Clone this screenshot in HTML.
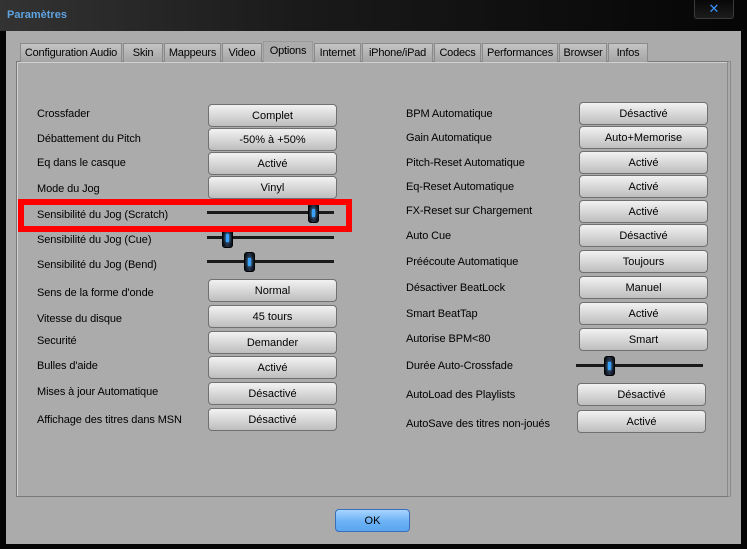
<!DOCTYPE html>
<html><head><meta charset="utf-8"><style>
*{margin:0;padding:0;box-sizing:border-box}
body{width:747px;height:549px;background:#050505;position:relative;overflow:hidden;font-family:Tahoma,"Liberation Sans","DejaVu Sans",sans-serif;font-size:11px;color:#000}
#title{position:absolute;left:0;top:0;width:747px;height:31px;background:linear-gradient(90deg,#333 0%,#1a1a1a 40%,#050505 100%)}
#title span{position:absolute;left:7px;top:9px;color:#5fa3e0;font-weight:bold;font-size:11px}
#close{position:absolute;left:694px;top:-3px;width:40px;height:22px;border:1px solid #3a3a3a;border-radius:3px;background:linear-gradient(#050505,#1c1c1c);color:#3a95ff;font-weight:bold;font-size:13px;text-align:center;line-height:23px;font-family:"DejaVu Sans",sans-serif}
#client{position:absolute;left:6px;top:31px;width:735px;height:513px;background:#ababab}
#panel{position:absolute;left:16px;top:61px;width:715px;height:436px;border:1px solid #7a7a7a;border-right:4px double #8a8a8a;box-shadow:inset 1px 1px 0 #d0d0d0}
.tab{position:absolute;top:43px;height:19px;border:1px solid #8a8a8a;border-bottom:none;background:linear-gradient(#c4c4c4,#a4a4a4);text-align:center;line-height:19px;font-size:11px;letter-spacing:-0.2px}
.tab.sel{top:41px;height:21px;background:#ababab;z-index:2;border-color:#999;line-height:18px}
.l{position:absolute;white-space:nowrap;letter-spacing:-0.1px}
.b{position:absolute;width:129px;height:23px;border:1px solid #707070;border-radius:4px;background:linear-gradient(#f2f2f2 0%,#d8d8d8 50%,#bdbdbd 100%);text-align:center;line-height:23px}
.tr{position:absolute;height:3px;background:#1a1a1a;width:127px}
.th{position:absolute;width:11px;height:20px;border-radius:3px;background:linear-gradient(90deg,#0a0f18,#26334a 50%,#0a0f18);border:1px solid #000}
.th::after{content:"";position:absolute;left:3px;top:5px;width:3px;height:8px;background:#3aa0ff;box-shadow:0 0 3px #6cf}
#red{position:absolute;left:18px;top:199px;width:334px;height:33px;border:6px solid #f00}
#ok{position:absolute;left:335px;top:509px;width:75px;height:23px;border:1px solid #3a6fb8;border-radius:4px;background:linear-gradient(#a8d4ff,#6cb2f6 55%,#5aa6f0);text-align:center;line-height:22px;font-size:11px}
</style></head><body>
<div id="title"><span>Paramètres</span></div>
<div id="close">✕</div>
<div id="client"></div>
<div id="panel"></div>
<div class="tab" style="left:20px;width:102px">Configuration Audio</div>
<div class="tab" style="left:123px;width:40px">Skin</div>
<div class="tab" style="left:164px;width:57px">Mappeurs</div>
<div class="tab" style="left:222px;width:40px">Video</div>
<div class="tab sel" style="left:263px;width:50px">Options</div>
<div class="tab" style="left:314px;width:47px">Internet</div>
<div class="tab" style="left:362px;width:71px">iPhone/iPad</div>
<div class="tab" style="left:434px;width:47px">Codecs</div>
<div class="tab" style="left:482px;width:76px">Performances</div>
<div class="tab" style="left:559px;width:48px">Browser</div>
<div class="tab" style="left:608px;width:40px">Infos</div>

<div class="l" style="left:37px;top:108px">Crossfader</div><div class="b" style="left:208px;top:104px">Complet</div>
<div class="l" style="left:37px;top:133px">Débattement du Pitch</div><div class="b" style="left:208px;top:128px">-50% à +50%</div>
<div class="l" style="left:37px;top:157px">Eq dans le casque</div><div class="b" style="left:208px;top:152px">Activé</div>
<div class="l" style="left:37px;top:183px">Mode du Jog</div><div class="b" style="left:208px;top:176px">Vinyl</div>
<div class="l" style="left:37px;top:209px">Sensibilité du Jog (Scratch)</div><div class="tr" style="left:207px;top:211px"></div><div class="th" style="left:308px;top:203px"></div>
<div class="l" style="left:37px;top:234px">Sensibilité du Jog (Cue)</div><div class="tr" style="left:207px;top:236px"></div><div class="th" style="left:222px;top:228px"></div>
<div class="l" style="left:37px;top:259px">Sensibilité du Jog (Bend)</div><div class="tr" style="left:207px;top:260px"></div><div class="th" style="left:244px;top:252px"></div>
<div class="l" style="left:37px;top:287px">Sens de la forme d'onde</div><div class="b" style="left:208px;top:279px">Normal</div>
<div class="l" style="left:37px;top:313px">Vitesse du disque</div><div class="b" style="left:208px;top:305px">45 tours</div>
<div class="l" style="left:37px;top:335px">Securité</div><div class="b" style="left:208px;top:331px">Demander</div>
<div class="l" style="left:37px;top:360px">Bulles d'aide</div><div class="b" style="left:208px;top:356px">Activé</div>
<div class="l" style="left:37px;top:386px">Mises à jour Automatique</div><div class="b" style="left:208px;top:382px">Désactivé</div>
<div class="l" style="left:37px;top:414px">Affichage des titres dans MSN</div><div class="b" style="left:208px;top:408px">Désactivé</div>

<div class="l" style="left:406px;top:108px">BPM Automatique</div><div class="b" style="left:579px;top:102px">Désactivé</div>
<div class="l" style="left:406px;top:132px">Gain Automatique</div><div class="b" style="left:579px;top:126px">Auto+Memorise</div>
<div class="l" style="left:406px;top:157px">Pitch-Reset Automatique</div><div class="b" style="left:579px;top:151px">Activé</div>
<div class="l" style="left:406px;top:181px">Eq-Reset Automatique</div><div class="b" style="left:579px;top:175px">Activé</div>
<div class="l" style="left:406px;top:205px">FX-Reset sur Chargement</div><div class="b" style="left:579px;top:200px">Activé</div>
<div class="l" style="left:406px;top:230px">Auto Cue</div><div class="b" style="left:579px;top:224px">Désactivé</div>
<div class="l" style="left:406px;top:256px">Préécoute Automatique</div><div class="b" style="left:579px;top:250px">Toujours</div>
<div class="l" style="left:406px;top:282px">Désactiver BeatLock</div><div class="b" style="left:579px;top:276px">Manuel</div>
<div class="l" style="left:406px;top:308px">Smart BeatTap</div><div class="b" style="left:579px;top:302px">Activé</div>
<div class="l" style="left:406px;top:333px">Autorise BPM&lt;80</div><div class="b" style="left:579px;top:328px">Smart</div>
<div class="l" style="left:406px;top:360px">Durée Auto-Crossfade</div><div class="tr" style="left:576px;top:364px"></div><div class="th" style="left:604px;top:356px"></div>
<div class="l" style="left:406px;top:389px">AutoLoad des Playlists</div><div class="b" style="left:577px;top:383px">Désactivé</div>
<div class="l" style="left:406px;top:418px">AutoSave des titres non-joués</div><div class="b" style="left:577px;top:410px">Activé</div>

<div id="red"></div>
<div id="ok">OK</div>
</body></html>
